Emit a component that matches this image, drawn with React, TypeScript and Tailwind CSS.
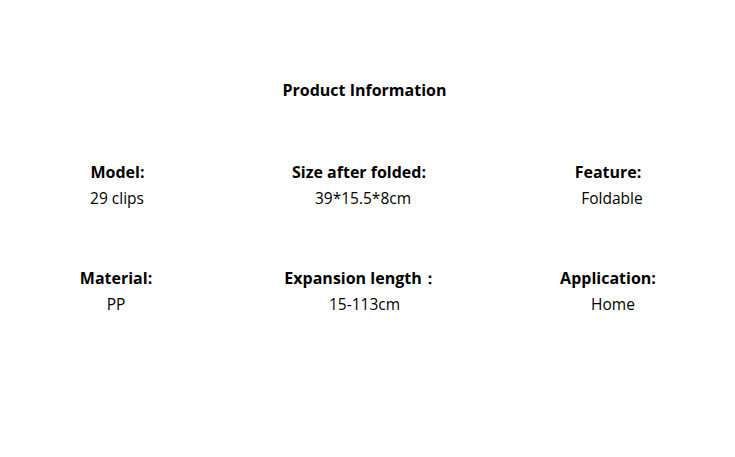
const ITEMS = [
  [
    { label: "Model:", value: "29 clips", labelShift: "pl-[3px]", shift: "pl-[2px]" },
    { label: "Size after folded:", value: "39*15.5*8cm", labelShift: "pr-[4px]", shift: "pl-[4px]" },
    { label: "Feature:", value: "Foldable", labelShift: "", shift: "pl-[8px]" },
  ],
  [
    { label: "Material:", value: "PP", labelShift: "", shift: "" },
    { label: "Expansion length\uff1a", value: "15-113cm", labelShift: "", shift: "pl-[7px]" },
    { label: "Application:", value: "Home", labelShift: "", shift: "pl-[10px]" },
  ],
];

const COLS = ["w-[232px]", "w-[258px]", "w-[236px]"];

export default function App() {
  return (
    <div className="w-[735px] h-[457px] bg-white text-black font-['Open_Sans',sans-serif]">
      <div className="pt-[78px] pr-[6px] text-center text-[16px] font-bold leading-[24px]">
        Product Information
      </div>
      <div className="mt-[58px] flex flex-col gap-[56px]">
        {ITEMS.map((row, i) => (
          <div key={i} className="flex">
            {row.map((item, j) => (
              <div key={item.label} className={`${COLS[j]} flex flex-col items-center`}>
                <div className={`${item.labelShift} text-[16px] font-bold leading-[24px]`}>{item.label}</div>
                <div className={`${item.shift} mt-[2px] text-[15.5px] leading-[24px]`}>{item.value}</div>
              </div>
            ))}
          </div>
        ))}
      </div>
    </div>
  );
}
